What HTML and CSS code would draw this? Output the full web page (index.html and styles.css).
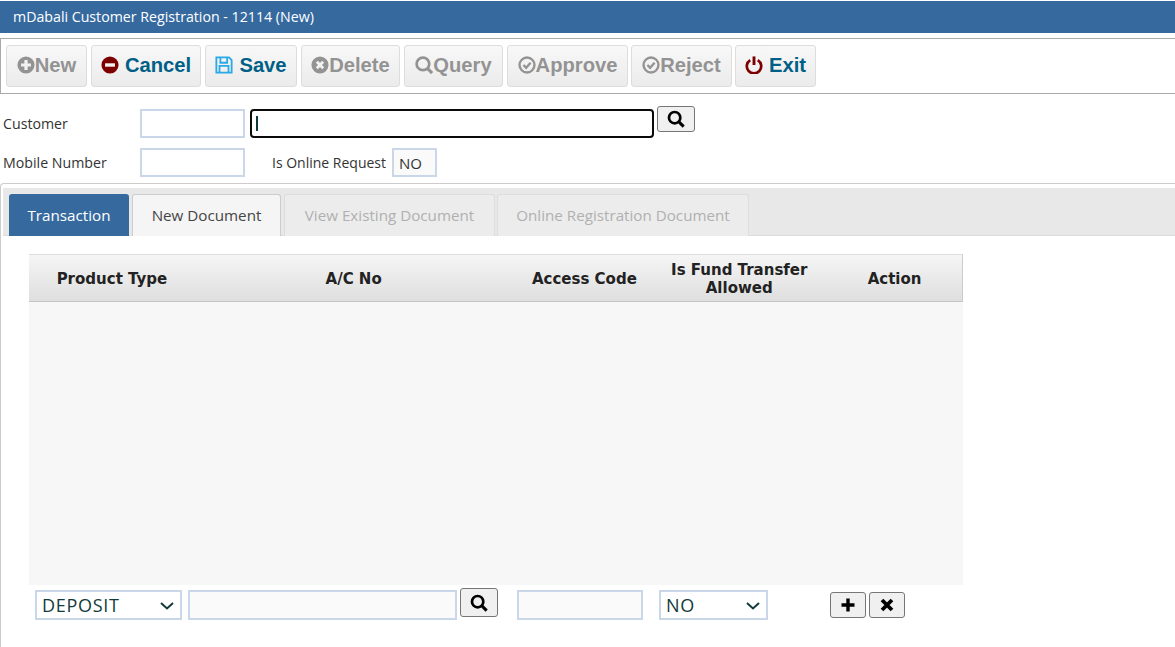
FILE: index.html
```html
<!DOCTYPE html>
<html lang="en">
<head>
  <meta charset="UTF-8" />
  <title>mDabali Customer Registration</title>
  <link rel="stylesheet" href="styles.css">
</head>
<body>

  <div class="title-bar">mDabali Customer Registration - 12114 (New)</div>

  <div class="toolbar">
    <button class="tool off w-new">
      <svg class="ico" viewBox="0 0 20 20"><circle cx="10" cy="10" r="9.500" fill="currentColor"/><path d="M10 4.500v11M4.500 10h11" stroke="#f2f2f2" stroke-width="3.600"/></svg>New
    </button>
    <button class="tool on w-cancel">
      <svg class="ico ico-red gap" viewBox="0 0 20 20"><circle cx="10" cy="10" r="9.500" fill="currentColor"/><path d="M4.500 10h11" stroke="#f2f2f2" stroke-width="3.800"/></svg>Cancel
    </button>
    <button class="tool on w-save">
      <svg class="ico ico-blue gap" viewBox="0 0 20 20"><path d="M1.500 1.500h14l3 3v14h-17z" fill="none" stroke="currentColor" stroke-width="2"/><path d="M6 2v5.500h7.500V2M5 18v-7h10v7" fill="none" stroke="currentColor" stroke-width="2"/></svg>Save
    </button>
    <button class="tool off w-delete">
      <svg class="ico" viewBox="0 0 20 20"><circle cx="10" cy="10" r="9.500" fill="currentColor"/><path d="M6.500 6.500l7 7M13.500 6.500l-7 7" stroke="#f2f2f2" stroke-width="3.200"/></svg>Delete
    </button>
    <button class="tool off w-query">
      <svg class="ico" viewBox="0 0 20 20"><circle cx="8.800" cy="8.800" r="7" fill="none" stroke="currentColor" stroke-width="3"/><path d="M14 14l5 5" stroke="currentColor" stroke-width="3.400"/></svg>Query
    </button>
    <button class="tool off w-approve">
      <svg class="ico" viewBox="0 0 20 20"><circle cx="10" cy="10" r="8.300" fill="none" stroke="currentColor" stroke-width="2.600"/><path d="M6 10l3 3 5-5.500" fill="none" stroke="currentColor" stroke-width="2.600"/></svg>Approve
    </button>
    <button class="tool off w-reject">
      <svg class="ico" viewBox="0 0 20 20"><circle cx="10" cy="10" r="8.300" fill="none" stroke="currentColor" stroke-width="2.600"/><path d="M6 10l3 3 5-5.500" fill="none" stroke="currentColor" stroke-width="2.600"/></svg>Reject
    </button>
    <button class="tool on w-exit">
      <svg class="ico ico-red gap" viewBox="0 0 20 20"><path d="M5.800 4.500a8 8 0 1 0 8.400 0" fill="none" stroke="currentColor" stroke-width="3"/><path d="M10 0.500v9.500" stroke="currentColor" stroke-width="3.200"/></svg>Exit
    </button>
  </div>

  <div class="form-row first">
    <label class="lbl">Customer</label>
    <input type="text" class="field w-code" />
    <div class="focus-wrap">
      <input type="text" class="field-focus" />
      <span class="caret"></span>
    </div>
    <button class="icon-btn search-top">
      <svg class="ico-sm" viewBox="0 0 20 20"><circle cx="8.500" cy="8.500" r="6.300" fill="none" stroke="#000" stroke-width="3"/><path d="M13 13l5.500 5.500" stroke="#000" stroke-width="3.400"/></svg>
    </button>
  </div>

  <div class="form-row second">
    <label class="lbl">Mobile Number</label>
    <input type="text" class="field w-code" />
    <label class="lbl-online">Is Online Request</label>
    <input type="text" class="field w-online" value="NO" />
  </div>

  <div class="panel">
    <div class="tabs">
      <div class="tab active">Transaction</div>
      <div class="tab normal">New Document</div>
      <div class="tab disabled w-view">View Existing Document</div>
      <div class="tab disabled w-online-doc">Online Registration Document</div>
    </div>

    <div class="tab-body">
      <div class="grid-head">
        <div class="col-product">Product Type</div>
        <div class="col-ac">A/C No</div>
        <div class="col-access">Access Code</div>
        <div class="col-fund">Is Fund Transfer Allowed</div>
        <div class="col-action">Action</div>
      </div>
      <div class="grid-body"></div>
      <div class="entry-row">
        <div class="pick-wrap w-type">
          <select class="pick"><option>DEPOSIT</option></select>
          <svg class="chev" viewBox="0 0 14 8"><path d="M1 1l6 5.500L13 1" fill="none" stroke="#123a3a" stroke-width="2"/></svg>
        </div>
        <input type="text" class="field w-ac" />
        <button class="icon-btn search-ac">
          <svg class="ico-sm" viewBox="0 0 20 20"><circle cx="8.500" cy="8.500" r="6.300" fill="none" stroke="#000" stroke-width="3"/><path d="M13 13l5.500 5.500" stroke="#000" stroke-width="3.400"/></svg>
        </button>
        <input type="text" class="field w-access" />
        <div class="pick-wrap w-fund">
          <select class="pick"><option>NO</option></select>
          <svg class="chev" viewBox="0 0 14 8"><path d="M1 1l6 5.500L13 1" fill="none" stroke="#123a3a" stroke-width="2"/></svg>
        </div>
        <button class="icon-btn small add">
          <svg class="ico-xs" viewBox="0 0 14 14"><path d="M7 0.500v13M0.500 7h13" stroke="#000" stroke-width="3.400"/></svg>
        </button>
        <button class="icon-btn small remove">
          <svg class="ico-xs" viewBox="0 0 14 14"><path d="M2 2l10 10M12 2L2 12" stroke="#000" stroke-width="3.800"/></svg>
        </button>
      </div>
    </div>
  </div>

</body>
</html>
```

FILE: styles.css
```css
body {
  margin: 0;
  height: 647px;
  overflow: hidden;
  background: #fff;
  font-family: "Open Sans", Arial, sans-serif;
  font-size: 14.200px;
  color: #333;
}

button, input, select {
  box-sizing: border-box;
  margin: 0;
  font-family: inherit;
}

.title-bar {
  margin-top: 1px;
  height: 32px;
  line-height: 32px;
  padding-left: 13px;
  background-color: #366a9f;
  color: #fff;
  font-size: 14.200px;
}

/* toolbar */
.toolbar {
  display: flex;
  gap: 4px;
  height: 56px;
  box-sizing: border-box;
  margin-top: 5px;
  padding: 6px 5px;
  border: 1px solid #aaa;
  border-right: none;
}

.tool {
  display: flex;
  align-items: center;
  justify-content: center;
  height: 42px;
  padding: 0 0 2px;
  background: linear-gradient(to bottom, #f8f8f8, #ebebeb);
  border: 1px solid #ddd;
  border-radius: 3px;
  font-family: "Liberation Sans", Arial, sans-serif;
  font-size: 20.200px;
  font-weight: bold;
}

.tool.off { color: #939393; }
.tool.on { color: #005f87; }

.ico { width: 18px; height: 18px; flex: none; }
.ico-red { color: #7d0000; }
.ico-blue { color: #29a9e8; }
.gap { margin-right: 6px; }

.w-new { width: 81px; }
.w-cancel { width: 110px; }
.w-save { width: 92px; }
.w-delete { width: 99px; }
.w-query { width: 99px; }
.w-approve { width: 121px; margin-right: -1px; }
.w-reject { width: 101px; margin-right: -1px; }
.w-exit { width: 81px; }

/* form rows */
.form-row {
  display: flex;
  align-items: flex-start;
  padding-left: 3px;
}

.form-row.first { margin-top: 15px; height: 29px; }
.form-row.second { margin-top: 10px; height: 29px; }

.lbl {
  width: 137px;
  line-height: 30px;
  color: #333;
}

.lbl-online {
  margin-left: 27px;
  width: 120px;
  white-space: nowrap;
  font-size: 14px;
  line-height: 30px;
}

.field {
  height: 29px;
  padding: 0 5px;
  background: #fafafa;
  border: 2px solid #c9d7e8;
  color: #333;
  font-size: 15px;
}

.w-code { width: 105px; background: #fff; }
.w-online { width: 45px; }
.w-ac { width: 269px; height: 30px; }
.w-access { width: 126px; height: 30px; margin-left: 19px; }

.focus-wrap {
  position: relative;
  margin-left: 5px;
  width: 404px;
  height: 29px;
}

.field-focus {
  width: 100%;
  height: 100%;
  background: #fff;
  border: 2px solid #0a0a0a;
  border-radius: 4px;
  outline: none;
}

.caret {
  position: absolute;
  left: 6px;
  top: 7px;
  width: 2px;
  height: 15px;
  background: #0f3a3a;
}

.icon-btn {
  display: flex;
  align-items: center;
  justify-content: center;
  padding: 0;
  background: #f0f0f0;
  border: 1px solid #767676;
  border-radius: 3px;
}

.ico-sm { width: 18px; height: 18px; }
.ico-xs { width: 14px; height: 14px; }

.search-top {
  width: 38px;
  height: 26px;
  margin-left: 3px;
  margin-top: -3px;
}

/* tabs */
.panel {
  margin-top: 6px;
  height: 464px;
  box-sizing: border-box;
  padding: 4px 0 0 2px;
  border-top: 1px solid #ccc;
  border-left: 1px solid #ccc;
  border-top-left-radius: 4px;
}

.tabs {
  display: flex;
  gap: 3px;
  height: 48px;
  box-sizing: border-box;
  padding: 6px 0 0 6px;
  background: #e8e8e8;
  border-bottom: 1px solid #ddd;
}

.tab {
  box-sizing: border-box;
  height: 42px;
  line-height: 43px;
  text-align: center;
  font-size: 15.200px;
  border-radius: 3px 3px 0 0;
}

.tab.active {
  width: 120px;
  background: #366a9f;
  color: #fff;
}

.tab.normal {
  width: 149px;
  background: #f5f5f5;
  border: 1px solid #ccc;
  border-bottom: none;
  line-height: 41px;
  color: #444;
}

.tab.disabled {
  background: #ececec;
  border: 1px solid #ddd;
  border-bottom: none;
  line-height: 41px;
  color: #b0b0b0;
}

.w-view { width: 211px; }
.w-online-doc { width: 252px; margin-left: -1px; }

/* grid */
.tab-body {
  padding: 18px 0 0 26px;
}

.grid-head {
  display: flex;
  align-items: center;
  width: 934px;
  height: 48px;
  box-sizing: border-box;
  padding-top: 2px;
  background: linear-gradient(to bottom, #f5f5f5, #dedede);
  border-top: 1px solid #ddd;
  border-right: 1px solid #ccc;
  border-bottom: 1px solid #c4c4c4;
  font-family: "DejaVu Sans", Verdana, sans-serif;
  font-size: 15px;
  font-weight: bold;
  line-height: 18px;
  color: #222;
  text-align: center;
}

.col-product { width: 166px; }
.col-ac { width: 318px; }
.col-access { width: 144px; }
.col-fund { width: 166px; padding: 0 4px; box-sizing: border-box; }
.col-action { width: 140px; padding-left: 5px; box-sizing: border-box; }

.grid-body {
  width: 934px;
  height: 283px;
  background: #f7f7f7;
}

.entry-row {
  display: flex;
  align-items: flex-start;
  padding: 5px 0 0 6px;
}

.pick-wrap {
  position: relative;
  height: 30px;
}

.pick {
  appearance: none;
  width: 100%;
  height: 100%;
  padding: 0 5px;
  background-color: #fff;
  border: 2px solid #c9d7e8;
  border-radius: 0;
  font-size: 18px;
  letter-spacing: 0.700px;
  font-family: "Open Sans", sans-serif;
  color: #123a3a;
}

.chev {
  position: absolute;
  right: 8px;
  top: 12px;
  width: 14px;
  height: 8px;
}

.w-type { width: 147px; margin-right: 6px; }
.w-fund { width: 109px; margin-left: 16px; }

.search-ac {
  width: 38px;
  height: 29px;
  margin-left: 3px;
  margin-top: -2px;
}

.small {
  width: 36px;
  height: 26px;
  margin-top: 2px;
}

.add { margin-left: 62px; }
.remove { margin-left: 3px; }
```
